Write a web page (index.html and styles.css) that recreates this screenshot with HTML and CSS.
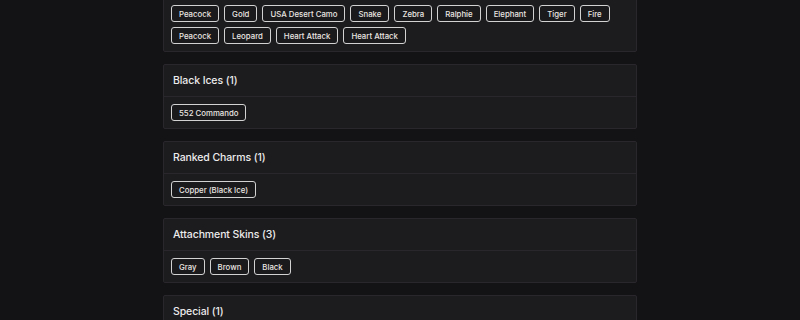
FILE: index.html
```html
<!DOCTYPE html>
<html lang="en">
<head>
    <meta charset="UTF-8">
    <meta name="viewport" content="width=device-width, initial-scale=1.0">
    <title>Collection</title>
    <link rel="stylesheet" href="styles.css">
</head>
<body>

<div class="list">
    <div class="card card-first">
        <div class="card-body">
            <span class="chip">Peacock</span>
            <span class="chip">Gold</span>
            <span class="chip">USA Desert Camo</span>
            <span class="chip">Snake</span>
            <span class="chip">Zebra</span>
            <span class="chip">Ralphie</span>
            <span class="chip">Elephant</span>
            <span class="chip">Tiger</span>
            <span class="chip">Fire</span>
            <span class="chip">Peacock</span>
            <span class="chip">Leopard</span>
            <span class="chip">Heart Attack</span>
            <span class="chip">Heart Attack</span>
        </div>
    </div>

    <div class="card">
        <div class="card-header">Black Ices (1)</div>
        <div class="card-body">
            <span class="chip">552 Commando</span>
        </div>
    </div>

    <div class="card">
        <div class="card-header">Ranked Charms (1)</div>
        <div class="card-body">
            <span class="chip">Copper (Black Ice)</span>
        </div>
    </div>

    <div class="card">
        <div class="card-header">Attachment Skins (3)</div>
        <div class="card-body">
            <span class="chip">Gray</span>
            <span class="chip">Brown</span>
            <span class="chip">Black</span>
        </div>
    </div>

    <div class="card">
        <div class="card-header">Special (1)</div>
        <div class="card-body">
            <span class="chip">Gold</span>
        </div>
    </div>
</div>

</body>
</html>
```

FILE: styles.css
```css
body {
    font-family: Inter, "Noto Sans", sans-serif;
    background-color: #131215;
    color: #e6e6e6;
    margin: 0;
    padding: 0;
}
.list {
    width: 474px;
    margin: 0 auto;
    display: flex;
    flex-direction: column;
    gap: 12px;
}
.card {
    background-color: #1c1b1e;
    border: 1px solid #29272b;
    border-radius: 2px;
}
.card-first {
    margin-top: -3px;
}
.card-header {
    height: 31px;
    line-height: 32px;
    padding: 0 9px;
    font-size: 10.5px;
    font-weight: 500;
    letter-spacing: -0.1px;
    color: #ececec;
    border-bottom: 1px solid #29272b;
}
.card-body {
    padding: 7px 7px;
    display: flex;
    flex-wrap: wrap;
    gap: 5px;
}
.chip {
    box-sizing: border-box;
    height: 17px;
    display: inline-flex;
    align-items: center;
    padding: 0 7px;
    font-size: 7.8px;
    font-weight: 500;
    color: #ebe7e2;
    border: 1px solid #d2d2d2;
    border-radius: 3px;
    background-color: #1a191c;
}
```
